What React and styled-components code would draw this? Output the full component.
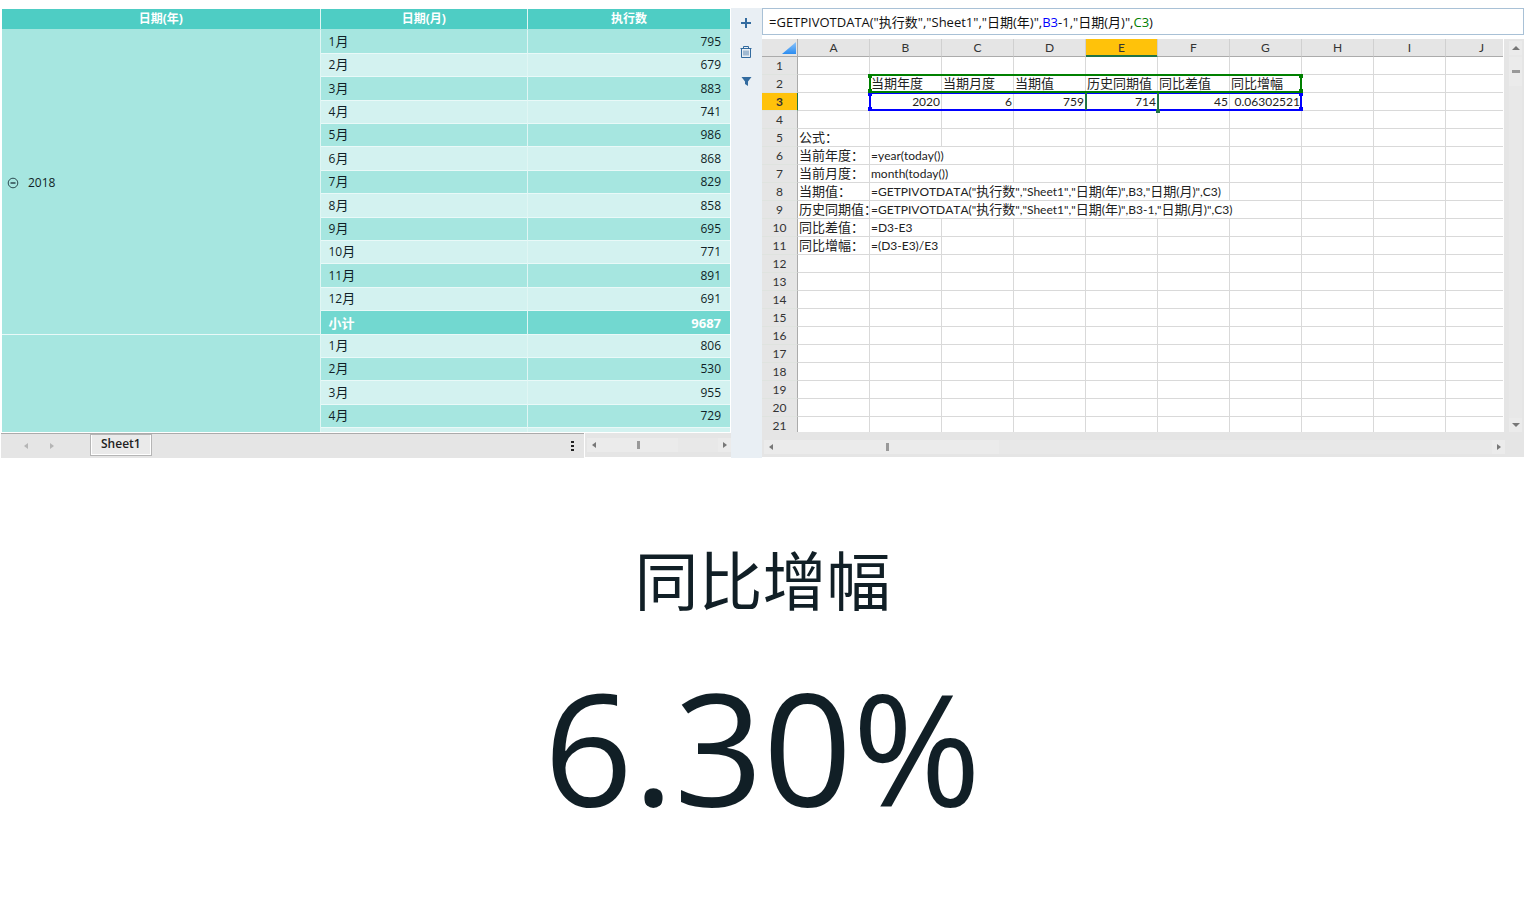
import { Fragment, useState } from 'react';
import styled, { createGlobalStyle, css } from 'styled-components';

const months2018 = [
    ['1月', 795],
    ['2月', 679],
    ['3月', 883],
    ['4月', 741],
    ['5月', 986],
    ['6月', 868],
    ['7月', 829],
    ['8月', 858],
    ['9月', 695],
    ['10月', 771],
    ['11月', 891],
    ['12月', 691],
];

const months2019 = [
    ['1月', 806],
    ['2月', 530],
    ['3月', 955],
    ['4月', 729],
    ['', ''],
];

const columns = ['A', 'B', 'C', 'D', 'E', 'F', 'G', 'H', 'I', 'J'];
const ROW_COUNT = 21;

// row number -> column index -> cell
const sheet = {
    2: {
        1: { text: '当期年度' },
        2: { text: '当期月度' },
        3: { text: '当期值' },
        4: { text: '历史同期值' },
        5: { text: '同比差值' },
        6: { text: '同比增幅' },
    },
    3: {
        1: { text: '2020', number: true },
        2: { text: '6', number: true },
        3: { text: '759', number: true },
        4: { text: '714', number: true },
        5: { text: '45', number: true },
        6: { text: '0.06302521', number: true },
    },
    5: { 0: { text: '公式：' } },
    6: { 0: { text: '当前年度：' }, 1: { text: '=year(today())', span: 2 } },
    7: { 0: { text: '当前月度：' }, 1: { text: 'month(today())', span: 2 } },
    8: {
        0: { text: '当期值：' },
        1: { text: '=GETPIVOTDATA("执行数","Sheet1","日期(年)",B3,"日期(月)",C3)', span: 5 },
    },
    9: {
        0: { text: '历史同期值：' },
        1: { text: '=GETPIVOTDATA("执行数","Sheet1","日期(年)",B3-1,"日期(月)",C3)', span: 6 },
    },
    10: { 0: { text: '同比差值：' }, 1: { text: '=D3-E3' } },
    11: { 0: { text: '同比增幅：' }, 1: { text: '=(D3-E3)/E3' } },
};

// chinese runs are set one size larger than the latin ones
const MixedText = ({ children }) =>
    children
        .split(/([\u4e00-\u9fff]+：?)/)
        .map((part, i) => (i % 2 ? <Han key={i}>{part}</Han> : <Fragment key={i}>{part}</Fragment>));

const arrowPaths = {
    left: 'M6 1v6L2 4z',
    right: 'M2 1v6l4-3z',
    up: 'M0 6h8L4 2z',
    down: 'M0 2h8L4 6z',
};

const Arrow = ({ dir }) => (
    <svg width="8" height="8" viewBox="0 0 8 8" aria-hidden="true">
        <path d={arrowPaths[dir]} fill="currentColor" />
    </svg>
);

const Pivot = () => (
    <PivotPanel>
        <PivotView>
            <PivotTable>
                <colgroup>
                    <YearCol />
                    <MonthCol />
                    <col />
                </colgroup>
                <thead>
                    <tr>
                        <PivotHead>日期(年)</PivotHead>
                        <PivotHead>日期(月)</PivotHead>
                        <PivotHead>执行数</PivotHead>
                    </tr>
                </thead>
                <tbody>
                    {months2018.map(([month, value], i) => (
                        <PivotRow key={month} $dark={i % 2 === 0}>
                            {i === 0 && (
                                <YearCell rowSpan={13}>
                                    <YearLabel>
                                        <CollapseButton aria-label="collapse 2018">
                                            <svg width="12" height="12" viewBox="0 0 12 12">
                                                <circle cx="6" cy="6" r="4.8" fill="none" stroke="#2b4a50" />
                                                <path d="M3.5 6h5" stroke="#10202a" strokeWidth="1.2" />
                                            </svg>
                                        </CollapseButton>
                                        2018
                                    </YearLabel>
                                </YearCell>
                            )}
                            <MonthCell>
                                <MixedText>{month}</MixedText>
                            </MonthCell>
                            <ValueCell>{value}</ValueCell>
                        </PivotRow>
                    ))}
                    <SubtotalRow>
                        <MonthCell>小计</MonthCell>
                        <ValueCell>9687</ValueCell>
                    </SubtotalRow>
                    {months2019.map(([month, value], i) => (
                        <PivotRow key={i} $dark={i % 2 === 1}>
                            {i === 0 && <YearCell rowSpan={5} />}
                            <MonthCell>
                                <MixedText>{month}</MixedText>
                            </MonthCell>
                            <ValueCell>{value}</ValueCell>
                        </PivotRow>
                    ))}
                </tbody>
            </PivotTable>
        </PivotView>
        <PivotFooter>
            <TabStrip>
                <TabArrows>
                    <ArrowButton $faded aria-label="previous sheet">
                        <Arrow dir="left" />
                    </ArrowButton>
                    <ArrowButton $faded aria-label="next sheet">
                        <Arrow dir="right" />
                    </ArrowButton>
                </TabArrows>
                <SheetTab>Sheet1</SheetTab>
                <MoreButton aria-label="more">
                    <svg width="3" height="10" viewBox="0 0 3 10">
                        <path d="M0 0h3v2H0zM0 4h3v2H0zM0 8h3v2H0z" fill="#222" />
                    </svg>
                </MoreButton>
            </TabStrip>
            <PivotScroll>
                <ArrowButton aria-label="scroll left">
                    <Arrow dir="left" />
                </ArrowButton>
                <Track>
                    <Thumb $size="66%" />
                </Track>
                <ArrowButton aria-label="scroll right">
                    <Arrow dir="right" />
                </ArrowButton>
            </PivotScroll>
        </PivotFooter>
    </PivotPanel>
);

const SheetRow = ({ row }) => {
    const cells = sheet[row] || {};
    const tds = [];
    for (let c = 0; c < columns.length; c++) {
        const cell = cells[c];
        const span = cell?.span || 1;
        tds.push(
            <SheetCell key={c} colSpan={span} $number={cell?.number}>
                {cell && <MixedText>{cell.text}</MixedText>}
            </SheetCell>
        );
        c += span - 1;
    }
    return (
        <tr>
            <RowHead scope="row" $active={row === 3}>
                {row}
            </RowHead>
            {tds}
        </tr>
    );
};

const Sheet = () => {
    const [activeColumn, setActiveColumn] = useState('E');

    return (
        <SheetPanel>
            <FormulaBar
                role="textbox"
                aria-label="formula"
                contentEditable
                suppressContentEditableWarning
                spellCheck={false}
            >
                =GETPIVOTDATA("执行数","Sheet1","日期(年)",<Ref $color="#0000ff">B3</Ref>
                -1,"日期(月)",<Ref $color="#008000">C3</Ref>)
            </FormulaBar>
            <SheetBody>
                <SheetView>
                    <SheetTable>
                        <colgroup>
                            <HeadCol />
                        </colgroup>
                        <thead>
                            <tr>
                                <Corner>
                                    <svg width="14" height="12" viewBox="0 0 14 12">
                                        <defs>
                                            <linearGradient id="corner" x1="0" y1="0" x2="0" y2="1">
                                                <stop offset="0" stopColor="#8ec5fa" />
                                                <stop offset="1" stopColor="#2b8cf0" />
                                            </linearGradient>
                                        </defs>
                                        <path d="M14 0v12H0z" fill="url(#corner)" />
                                    </svg>
                                </Corner>
                                {columns.map((name) => (
                                    <ColumnHead
                                        key={name}
                                        $active={name === activeColumn}
                                        onClick={() => setActiveColumn(name)}
                                    >
                                        {name}
                                    </ColumnHead>
                                ))}
                            </tr>
                        </thead>
                        <tbody>
                            {Array.from({ length: ROW_COUNT }, (_, i) => (
                                <SheetRow key={i} row={i + 1} />
                            ))}
                        </tbody>
                    </SheetTable>
                    <RangeBox $color="#0000ff" $row={3} />
                    <RangeBox $color="#008000" $row={2} />
                    <Selection />
                </SheetView>
                <VerticalScroll>
                    <ArrowButton aria-label="scroll up">
                        <Arrow dir="up" />
                    </ArrowButton>
                    <VerticalTrack>
                        <VerticalThumb />
                    </VerticalTrack>
                    <ArrowButton aria-label="scroll down">
                        <Arrow dir="down" />
                    </ArrowButton>
                </VerticalScroll>
            </SheetBody>
            <SheetScroll>
                <ArrowButton aria-label="scroll left">
                    <Arrow dir="left" />
                </ArrowButton>
                <Track>
                    <Thumb $size="31%" />
                </Track>
                <ArrowButton aria-label="scroll right">
                    <Arrow dir="right" />
                </ArrowButton>
            </SheetScroll>
        </SheetPanel>
    );
};

const App = () => (
    <>
        <GlobalStyle />
        <Page>
            <Workspace>
                <Pivot />
                <Toolbar>
                    <ToolButton aria-label="add">
                        <svg width="12" height="12" viewBox="0 0 12 12">
                            <path d="M6 1v10M1 6h10" stroke="currentColor" strokeWidth="2" />
                        </svg>
                    </ToolButton>
                    <ToolButton aria-label="delete">
                        <svg width="12" height="12" viewBox="0 0 12 12" fill="none" stroke="currentColor">
                            <path d="M.5 2.5h11M3.5 2.5v-2h5v2M1.500 2.5v9h9v-9" />
                            <path d="M4 4.500v5M6 4.500v5M8 4.500v5" strokeWidth="0.8" />
                        </svg>
                    </ToolButton>
                    <ToolButton aria-label="filter">
                        <svg width="12" height="12" viewBox="0 0 12 12">
                            <path d="M1.500 2h10L8 6.500V11L5 9V6.500z" fill="currentColor" />
                        </svg>
                    </ToolButton>
                </Toolbar>
                <Sheet />
            </Workspace>
            <Kpi>
                <KpiTitle>同比增幅</KpiTitle>
                <KpiValue>6.30%</KpiValue>
            </Kpi>
        </Page>
    </>
);

export default App;

const GlobalStyle = createGlobalStyle`
    * {
        box-sizing: border-box;
    }
    body {
        margin: 0;
        background: #fff;
        color: #101f26;
        font-family: 'Open Sans', 'Noto Sans CJK SC', sans-serif;
        font-size: 13px;
    }
    button {
        border: none;
        padding: 0;
        background: none;
        font: inherit;
        color: inherit;
        cursor: pointer;
    }
    svg {
        display: block;
    }
`;

const Page = styled.main`
    padding: 8px 8px 0 1px;
`;

const Workspace = styled.section`
    display: grid;
    grid-template-columns: minmax(0, 730fr) 31px minmax(0, 762fr);
`;

/* pivot table */

const PivotPanel = styled.div`
    display: flex;
    flex-direction: column;
`;

const PivotView = styled.div`
    height: 424px;
    padding: 1px 1px 0;
    overflow: hidden;
`;

const PivotTable = styled.table`
    width: 100%;
    table-layout: fixed;
    border-collapse: separate;
    border-spacing: 0;
    font-size: 12px;
    line-height: 16px;
`;

const YearCol = styled.col`
    width: 43.75%;
`;

const MonthCol = styled.col`
    width: 28.5%;
`;

const pivotBorder = css`
    border-right: 1px solid #e0f6f4;
    border-bottom: 1px solid #e9f9f8;

    &:last-child {
        border-right: none;
    }
`;

const PivotHead = styled.th`
    ${pivotBorder}
    height: 21px;
    padding: 0;
    background: #4ecdc4;
    border-bottom-color: #a6e6e0;
    color: #fff;
`;

const PivotRow = styled.tr`
    height: 23px;
    background: ${(props) => (props.$dark ? '#a6e6e0' : '#d3f2f0')};

    &:nth-child(5n + 1),
    &:nth-child(5n + 3) {
        height: 24px;
    }
`;

const SubtotalRow = styled(PivotRow)`
    background: #72d8d0;
    color: #fff;
    font-size: 13px;
    font-weight: 700;
`;

const YearCell = styled.td`
    ${pivotBorder}
    padding: 2px 5px 0;
    background: #a6e6e0;
`;

const YearLabel = styled.div`
    display: flex;
    align-items: center;
    gap: 9px;
`;

const CollapseButton = styled.button`
    width: 12px;
    height: 12px;
`;

const MonthCell = styled.td`
    ${pivotBorder}
    padding: 0 8px;
`;

const ValueCell = styled.td`
    ${pivotBorder}
    padding: 0 9px;
    text-align: right;
`;

const PivotFooter = styled.div`
    display: flex;
    gap: 1px;
    margin-top: 1px;
`;

const TabStrip = styled.div`
    display: flex;
    flex: 1;
    align-items: flex-start;
    height: 25px;
    border-top: 1px solid #ababab;
    background: #e5e5e5;
`;

const TabArrows = styled.div`
    display: flex;
    gap: 13px;
    width: 89px;
    padding: 5px 0 0 18px;
`;

const ArrowButton = styled.button`
    display: flex;
    flex: none;
    align-items: center;
    justify-content: center;
    width: 13px;
    height: 14px;
    background: ${(props) => (props.$faded ? 'none' : '#ebebeb')};
    color: ${(props) => (props.$faded ? '#b5b5b5' : '#777')};
`;

const SheetTab = styled.button`
    height: 22px;
    padding: 0 9px;
    border: 2px solid #fff;
    border-top: none;
    outline: 1px solid #b5b5b5;
    outline-offset: -1px;
    background: #eaeaea;
    color: #222;
    font-size: 12px;
    font-weight: 600;
    line-height: 18px;
`;

const MoreButton = styled.button`
    margin: 7px 10px 0 auto;
`;

const PivotScroll = styled.div`
    display: flex;
    flex: 0 0 20%;
    height: 24px;
    padding: 5px 0 5px 2px;
    background: #e5e5e5;
`;

const Track = styled.div`
    flex: 1;
    background: #e8e8e8;
`;

const Thumb = styled.div`
    width: ${(props) => props.$size};
    height: 100%;
    background: linear-gradient(#999, #999) center / 3px 8px no-repeat #ebebeb;
`;

/* toolbar between the panels */

const Toolbar = styled.nav`
    display: flex;
    flex-direction: column;
    align-items: center;
    gap: 17px;
    padding: 9px 1px 0 0;
    background: #e9eff4;
    color: #336b9f;
`;

const ToolButton = styled.button`
    width: 12px;
    height: 12px;
`;

/* spreadsheet */

const SheetPanel = styled.div`
    display: flex;
    flex-direction: column;
`;

const FormulaBar = styled.div`
    height: 27px;
    margin-bottom: 4px;
    padding: 1px 6px 0;
    border: 1px solid #a9c1d6;
    color: #111;
    line-height: 25px;
    white-space: nowrap;
    overflow: hidden;
`;

const Ref = styled.span`
    color: ${(props) => props.$color};
`;

const SheetBody = styled.div`
    display: flex;
    height: 393px;
`;

const SheetView = styled.div`
    position: relative;
    flex: 1;
    overflow: hidden;
`;

const SheetTable = styled.table`
    width: 756px;
    table-layout: fixed;
    border-collapse: separate;
    border-spacing: 0;
    color: #333;
    font-family: Lato, 'Noto Sans CJK SC', sans-serif;
    font-size: 12px;
    font-kerning: none;
    line-height: 16px;
`;

const Han = styled.span`
    font-size: 13px;
    line-height: 12px;
`;

const HeadCol = styled.col`
    width: 36px;
`;

const headCell = css`
    height: 18px;
    padding: 1px 0 0;
    background: ${(props) => (props.$active ? '#ffc20a' : '#e5e5e5')};
    font-weight: ${(props) => (props.$active ? 700 : 400)};
`;

const Corner = styled.th`
    ${headCell}
    padding-left: 20px;
    border-right: 1px solid #ababab;
    border-bottom: 1px solid #ababab;
`;

const ColumnHead = styled.th`
    ${headCell}
    border-right: 1px solid #d0d0d0;
    border-bottom: 1px solid ${(props) => (props.$active ? '#217346' : '#ababab')};
    box-shadow: ${(props) => (props.$active ? 'inset 0 -1px #217346' : 'none')};
    font-weight: 400;
`;

const RowHead = styled.th`
    ${headCell}
    border-right: 1px solid ${(props) => (props.$active ? '#217346' : '#ababab')};
    border-bottom: 1px solid #dfe3df;
`;

const SheetCell = styled.td`
    height: 18px;
    padding: 1px 1px 0;
    border-right: 1px solid #d9d9d9;
    border-bottom: 1px solid #d9d9d9;
    color: #222;
    text-align: ${(props) => (props.$number ? 'right' : 'left')};
    white-space: nowrap;
`;

const RangeBox = styled.div`
    position: absolute;
    top: ${(props) => props.$row * 18 - 1}px;
    left: 107px;
    width: 433px;
    height: 19px;
    border: 2px solid ${(props) => props.$color};
    pointer-events: none;

    &::before,
    &::after {
        content: '';
        position: absolute;
        top: -2px;
        bottom: -2px;
        width: 4px;
        background:
            linear-gradient(${(props) => `${props.$color}, ${props.$color}`}) top / 4px 4px no-repeat,
            linear-gradient(${(props) => `${props.$color}, ${props.$color}`}) bottom / 4px 4px no-repeat;
    }
    &::before {
        left: -3px;
    }
    &::after {
        right: -3px;
    }
`;

const Selection = styled.div`
    position: absolute;
    top: 54px;
    left: 323px;
    width: 74px;
    height: 17px;
    border: solid #217346;
    border-width: 0 2px;
    pointer-events: none;

    &::after {
        content: '';
        position: absolute;
        right: -3px;
        bottom: -3px;
        width: 4px;
        height: 4px;
        background: #217346;
    }
`;

const VerticalScroll = styled.div`
    display: flex;
    flex-direction: column;
    align-items: flex-end;
    width: 20px;
    margin-left: 1px;
    padding: 2px 2px 0 0;
    background: #e5e5e5;
`;

const VerticalTrack = styled.div`
    flex: 1;
    width: 13px;
    padding-top: 2px;
    background: #e8e8e8;
`;

const VerticalThumb = styled.div`
    height: 29px;
    background: linear-gradient(#999, #999) center / 8px 3px no-repeat #ebebeb;
`;

const SheetScroll = styled.div`
    display: flex;
    height: 25px;
    padding: 8px 19px 3px 2px;
    background: #e5e5e5;
`;

/* kpi */

const Kpi = styled.section`
    display: flex;
    flex-direction: column;
    align-items: center;
    padding: 75px 0 24px;
    color: #111f26;
`;

const KpiTitle = styled.h1`
    margin: 0;
    font-size: 64px;
    font-weight: 400;
    line-height: 96px;
`;

const KpiValue = styled.p`
    margin: 12px 0 0;
    font-size: 156px;
    line-height: 210px;
`;
